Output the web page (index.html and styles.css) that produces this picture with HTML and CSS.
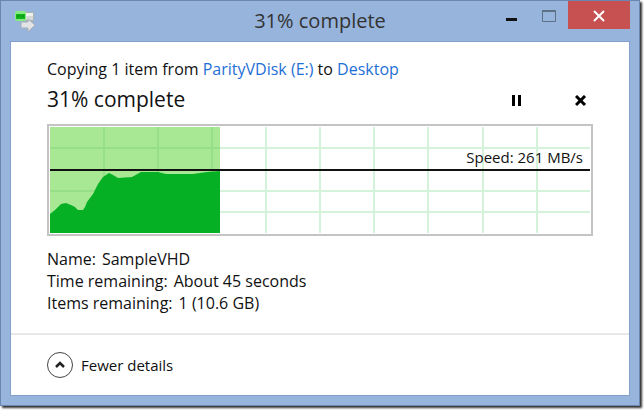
FILE: index.html
```
<!DOCTYPE html>
<html lang="en">
<head>
<meta charset="utf-8">
<title>31% complete</title>
<link rel="stylesheet" href="styles.css">
</head>

<body>
<div class="window">
  <header class="titlebar">
    <svg class="app-icon" width="22" height="22" viewBox="0 0 22 22" aria-hidden="true">
      <rect x="1" y="1" width="18" height="9" rx="1" fill="#a9b3ad"/>
      <rect x="10" y="2" width="8" height="3" fill="#eef1ee"/>
      <rect x="10" y="5" width="8" height="4" fill="#d5dad6"/>
      <rect x="0" y="0" width="11" height="10" rx="2" fill="#86ea80"/>
      <rect x="1" y="3" width="9" height="5" fill="#12b51e"/>
      <path d="M2 5h2M5 5h1M7 5h2" stroke="#087f13"/>
      <path d="M6 11h7V8l7 6-7 7v-4H6z" fill="#e3e4e6" stroke="#a6adb8"/>
    </svg>
    <h1 class="title">31% complete</h1>
    <div class="controls">
      <button class="control minimize" type="button" aria-label="Minimize">
        <svg width="12" height="12" viewBox="0 0 12 12"><path d="M1 8h11v3H1z" fill="#111"/></svg>
      </button>
      <button class="control maximize" type="button" aria-label="Maximize">
        <svg width="14" height="12" viewBox="0 0 14 12"><path d="M.5 1v10.500h13V1" fill="none" stroke="#5e7183"/><path d="M0 1h14" stroke="#5e7183" stroke-width="2"/></svg>
      </button>
      <button class="control close" type="button" aria-label="Close">
        <svg width="12" height="12" viewBox="0 0 12 12"><path d="M1 1l10 10M11 1L1 11" stroke="#fff" stroke-width="2"/></svg>
      </button>
    </div>
  </header>

  <main class="client">
    <section class="details">
      <p class="source">Copying 1 item from <a href="#source">ParityVDisk (E:)</a> to <a href="#target">Desktop</a></p>
      <div class="status">
        <h2 class="progress-text">31% complete</h2>
        <div class="actions">
          <button class="action" type="button" aria-label="Pause">
            <svg width="12" height="12" viewBox="0 0 12 12"><path d="M1 0h3v11H1zM7 0h3v11H7z" fill="#000"/></svg>
          </button>
          <button class="action" type="button" aria-label="Cancel">
            <svg width="12" height="12" viewBox="0 0 12 12"><path d="M1 1l9 9M10 1L1 10" stroke="#000" stroke-width="3"/></svg>
          </button>
        </div>
      </div>

      <div class="chart">
        <svg class="plot" viewBox="0 0 540 106" preserveAspectRatio="none" aria-hidden="true">
          <g stroke="#d5f3da" stroke-width="2">
            <path d="M54 0v106M108 0v106M162 0v106M216 0v106M270 0v106M324 0v106M378 0v106M433 0v106M487 0v106"/>
            <path d="M0 21h540M0 64h540M0 85h540"/>
          </g>
          <rect width="170" height="106" fill="#a8e793"/>
          <path d="M54 0v106M108 0v106M162 0v106M0 21h170M0 64h170" fill="none" stroke="#97df86" stroke-width="2"/>
          <path d="M0 87L5 83L11 77L16 76L21 78L25 80L28 83H33L35 80L37 75L43 67L48 57L53 50L59 46L63 48L68 51L82 50L91 45H108L116 47H143L157 45L170 44V106H0z" fill="#06b025"/>
          <path d="M0 43h541" stroke="#111" stroke-width="2"/>
        </svg>
        <span class="speed">Speed: 261 MB/s</span>
      </div>

      <dl class="facts">
        <div class="fact"><dt>Name:</dt><dd>SampleVHD</dd></div>
        <div class="fact"><dt>Time remaining:</dt><dd>About 45 seconds</dd></div>
        <div class="fact"><dt>Items remaining:</dt><dd>1 (10.6 GB)</dd></div>
      </dl>
    </section>

    <footer class="footer">
      <button class="toggle" type="button">
        <svg width="26" height="28" viewBox="0 0 26 28" aria-hidden="true">
          <circle cx="13" cy="14" r="12.500" fill="#fff" stroke="#444"/>
          <path d="M9 16l4-4 4 4" fill="none" stroke="#222" stroke-width="2.500"/>
        </svg>
        Fewer details
      </button>
    </footer>
  </main>
</div>
</body>
</html>
```

FILE: styles.css
```
* {
  box-sizing: border-box;
}

body {
  margin: 0;
  padding: 0 4px 4px 0;
  height: 100vh;
  background: #fff;
  color: #111;
  font-family: "Segoe UI", "Open Sans", sans-serif;
  font-size: 16px;
  line-height: 22px;
}

h1, h2, p, dl, dd {
  margin: 0;
  font-weight: normal;
}

button {
  padding: 0;
  border: 0;
  background: none;
  color: inherit;
  font: inherit;
}

svg {
  display: block;
}

a {
  color: #1f6fd6;
  text-decoration: none;
}

.window {
  display: flex;
  flex-direction: column;
  height: 100%;
  padding: 0 9px 9px;
  border: 1px solid #6b86b0;
  background: #97b4dd;
  box-shadow: 2px 2px 2px #333;
}

/* title bar */
.titlebar {
  display: grid;
  grid-template-columns: 1fr auto 1fr;
  align-items: start;
  height: 40px;
}

.app-icon {
  margin: 10px 0 0 5px;
}

.title {
  color: #333;
  font-size: 20px;
  line-height: 40px;
}

.controls {
  display: flex;
  justify-content: flex-end;
}

.control {
  display: flex;
  align-items: center;
  justify-content: center;
  width: 38px;
  height: 28px;
  padding-top: 2px;
}

.close {
  width: 62px;
  background: #c75050;
}

/* content */
.client {
  flex: 1;
  display: flex;
  flex-direction: column;
  border: 1px solid #839fcb;
  background: #fff;
}

.details {
  flex: 1;
  padding: 16px 36px 0;
}

.status {
  display: flex;
  justify-content: space-between;
  align-items: center;
  padding-top: 3px;
}

.progress-text {
  font-size: 21px;
  line-height: 32px;
}

.actions {
  display: flex;
  gap: 40px;
  padding-top: 4px;
}

.action {
  width: 24px;
  height: 24px;
  display: flex;
  align-items: center;
  justify-content: center;
}

.chart {
  position: relative;
  margin-top: 9px;
  padding: 1px;
  border: 2px solid #c4c4c4;
}

.plot {
  width: 100%;
  height: 106px;
}

.speed {
  position: absolute;
  top: 20px;
  right: 8px;
  font-size: 15px;
}

.facts {
  margin-top: 12px;
}

.fact {
  display: flex;
  gap: 6px;
}

.footer {
  padding: 16px 36px;
  border-top: 2px solid #e8e8e8;
}

.toggle {
  display: flex;
  align-items: center;
  gap: 8px;
  font-size: 15px;
}
```
